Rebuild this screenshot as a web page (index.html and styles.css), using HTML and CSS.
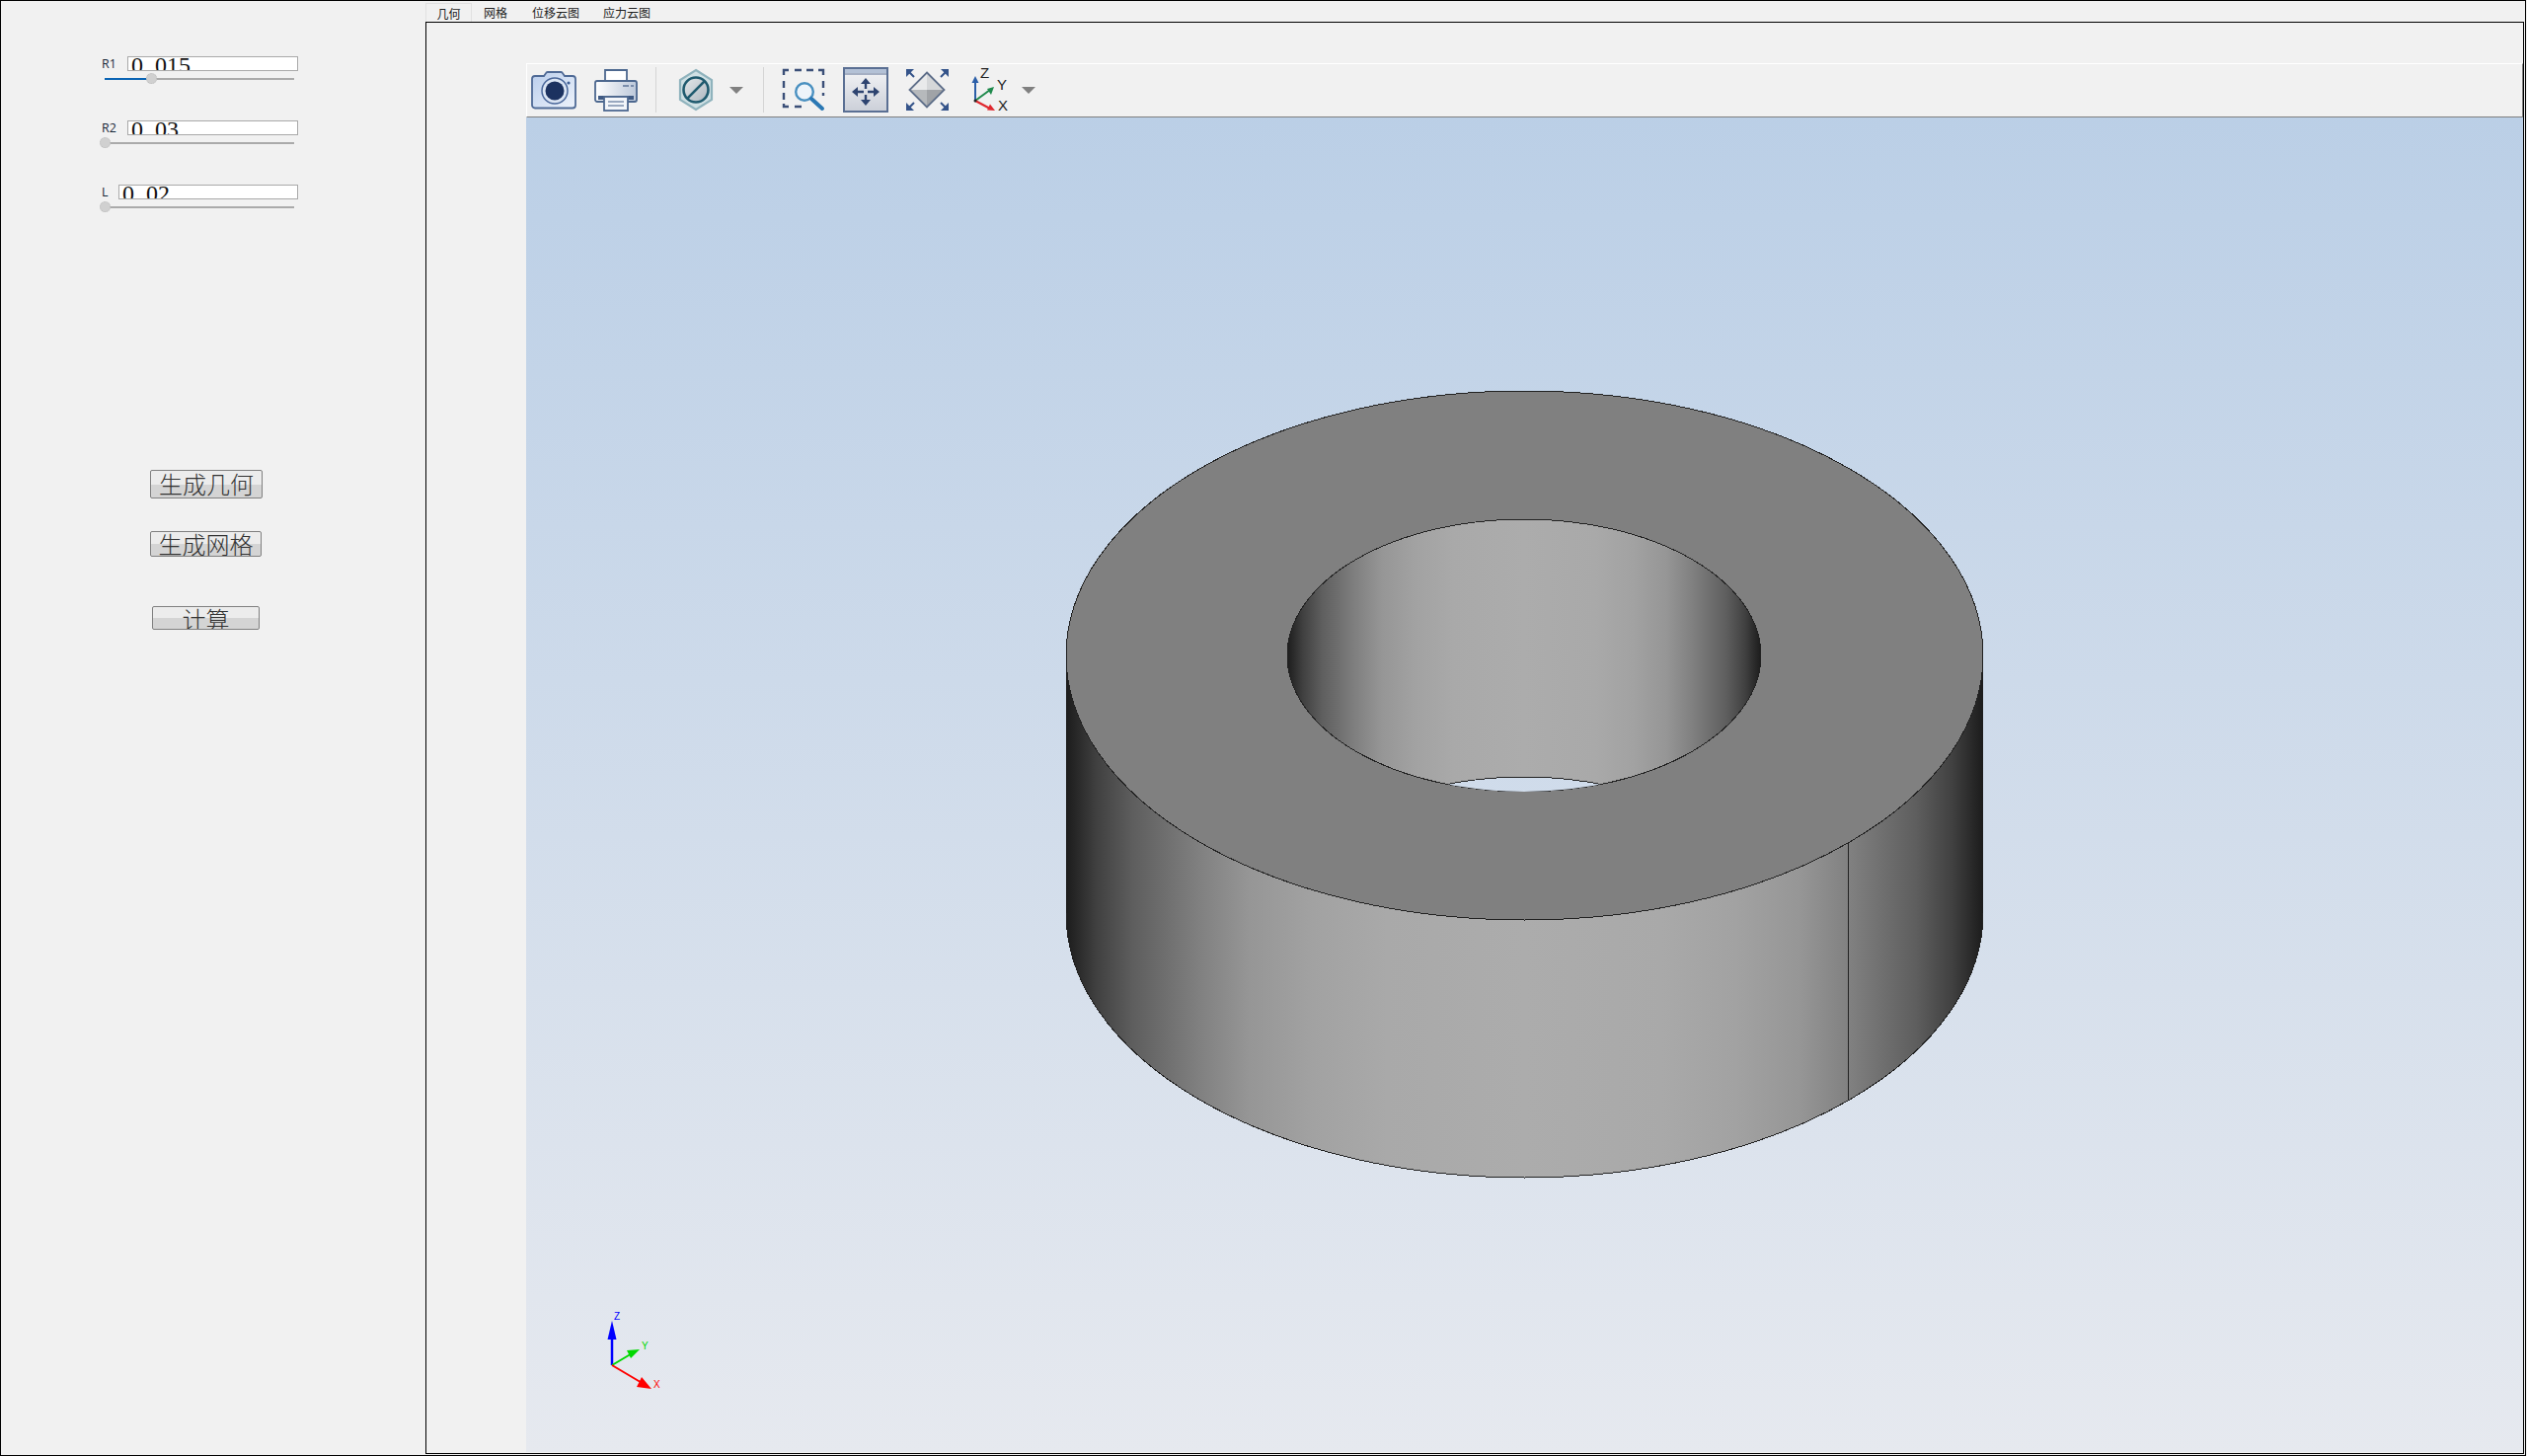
FILE: index.html
```html
<!DOCTYPE html>
<html lang="zh-CN">
<head>
<meta charset="utf-8">
<title>几何</title>
<link rel="stylesheet" href="styles.css">
</head>
<body>
<div class="window">
  <aside class="side">
    <div class="param">
      <div class="param-head"><span class="param-label">R1</span><div class="field field-r"><span class="num">0<i>.</i>015</span></div></div>
      <div class="slider"><div class="fill"></div><div class="knob knob-r1"></div></div>
    </div>
    <div class="param">
      <div class="param-head"><span class="param-label">R2</span><div class="field field-r"><span class="num">0<i>.</i>03</span></div></div>
      <div class="slider"><div class="knob"></div></div>
    </div>
    <div class="param">
      <div class="param-head"><span class="param-label param-label-l">L</span><div class="field field-l"><span class="num">0<i>.</i>02</span></div></div>
      <div class="slider"><div class="knob"></div></div>
    </div>
    <button class="btn btn-geo">生成几何</button>
    <button class="btn btn-mesh">生成网格</button>
    <button class="btn btn-calc">计算</button>
  </aside>
  <main class="main">
    <nav class="tabs">
      <span class="tab tab-active">几何</span>
      <span class="tab tab-2">网格</span>
      <span class="tab tab-3">位移云图</span>
      <span class="tab tab-4">应力云图</span>
    </nav>
    <section class="pane">
      <div class="view">
        <div class="toolbar">
          <svg class="tool i-camera" viewBox="0 0 46 40">
            <defs><linearGradient id="camg" x1="0" y1="0" x2="1" y2="1"><stop offset="0" stop-color="#b9cdec"/><stop offset="0.6" stop-color="#d9e4f5"/><stop offset="1" stop-color="#eef3fb"/></linearGradient></defs>
            <path d="M4 6h9l2.500-3.500a2 2 0 0 1 1.500-.5h13a2 2 0 0 1 1.500.5L34 6h8a3 3 0 0 1 3 3v26.500a3 3 0 0 1-3 3H4a3 3 0 0 1-3-3V9a3 3 0 0 1 3-3z" fill="url(#camg)" stroke="#4f6a96" stroke-width="1.800"/>
            <circle cx="24" cy="21" r="13" fill="#dbe5f4" stroke="#4a679a" stroke-width="1.500"/>
            <circle cx="24" cy="21" r="9.500" fill="#1c3260"/>
            <circle cx="38" cy="13" r="1.600" fill="#3f5f95"/>
          </svg>
          <svg class="tool i-print" viewBox="0 0 44 46">
            <defs><linearGradient id="prg" x1="0" y1="0" x2="1" y2="0"><stop offset="0" stop-color="#ffffff"/><stop offset="1" stop-color="#bcc8da"/></linearGradient></defs>
            <path d="M11 15V3h22v12" fill="#fff" stroke="#4d688f" stroke-width="1.800"/>
            <rect x="1" y="14" width="42" height="21" rx="2" fill="url(#prg)" stroke="#4d688f" stroke-width="1.800"/>
            <rect x="4" y="29" width="36" height="4" fill="#3f5a84"/>
            <path d="M29 19h6M37 19h3" stroke="#7a8dab" stroke-width="2"/>
            <rect x="10" y="30" width="24" height="14" fill="#f3f6fa" stroke="#4d688f" stroke-width="1.800"/>
            <path d="M14 35h16M14 39h16" stroke="#7c8fac" stroke-width="1.600"/>
          </svg>
          <span class="sep sep-1"></span>
          <svg class="tool i-hex" viewBox="0 0 36 44">
            <defs><linearGradient id="hexg" x1="0" y1="0" x2="1" y2="1"><stop offset="0" stop-color="#e3e8ea"/><stop offset="1" stop-color="#adb6bf"/></linearGradient></defs>
            <path d="M18 2l16 10v20L18 42 2 32V12z" fill="#cfe0e4" stroke="#8fb3bd" stroke-width="2.200"/>
            <circle cx="18" cy="22" r="12.500" fill="url(#hexg)" stroke="#1f5a6e" stroke-width="2.600"/>
            <path d="M9.200 30.800l17.600-17.600" stroke="#1f5a6e" stroke-width="2.600"/>
          </svg>
          <span class="caret caret-1"></span>
          <span class="sep sep-2"></span>
          <svg class="tool i-zoom" viewBox="0 0 44 44">
            <path d="M2 7V2h5M13 2h7M25 2h7M37 2h5v5M42 13v7M42 25v3M2 13v7M2 25v7M2 36v3h5M13 39h7" fill="none" stroke="#3b4f78" stroke-width="2.400"/>
            <circle cx="23" cy="24" r="8.800" fill="#eef4fa" stroke="#4a90c0" stroke-width="2.400"/>
            <path d="M30 31l11 10" stroke="#2b78b4" stroke-width="4" stroke-linecap="round"/>
          </svg>
          <svg class="tool i-pan" viewBox="0 0 46 46">
            <defs><linearGradient id="pang" x1="0" y1="0" x2="0" y2="1"><stop offset="0" stop-color="#f4f5f7"/><stop offset="1" stop-color="#cbcfd8"/></linearGradient></defs>
            <rect x="1" y="1" width="44" height="44" fill="url(#pang)" stroke="#5a6f93" stroke-width="2"/>
            <rect x="2" y="2" width="42" height="4" fill="#b3c1d6"/>
            <path d="M2 7h42" stroke="#5a6f93" stroke-width="1"/>
            <path d="M23 15v7M23 28v7M15 25h6M25 25h7" stroke="#2e4470" stroke-width="2.400"/>
            <path d="M23 11l5 6h-10zM23 39l5-6h-10zM9 25l6-5v10zM37 25l-6-5v10z" fill="#2e4470"/>
          </svg>
          <svg class="tool i-fit" viewBox="0 0 46 44">
            <path d="M22 4.500L39.500 22H4.500z" fill="#e9eaeb"/>
            <path d="M22 4.500L39.500 22H22z" fill="#d5d7d9"/>
            <path d="M22 39.500L39.500 22H22z" fill="#a0a3a7"/>
            <path d="M22 39.500L4.500 22H22z" fill="#b6b9bc"/>
            <path d="M22 4.500L39.500 22 22 39.500 4.500 22z" fill="none" stroke="#5f6f8a" stroke-width="1.800"/>
            <path d="M1 1h8l-8 8zM44 1h-8l8 8zM1 43h8l-8-8zM44 43h-8l8-8z" fill="#35548a"/>
            <path d="M3 3l6 6M42 3l-6 6M3 41l6-6M42 41l-6-6" stroke="#35548a" stroke-width="2"/>
          </svg>
          <svg class="tool i-axes" viewBox="0 0 46 50">
            <path d="M4 36V16" stroke="#2c5fa8" stroke-width="2"/>
            <path d="M4 11l3.500 7h-7z" fill="#2c5fa8"/>
            <path d="M4 36l15-11" stroke="#1f8a4c" stroke-width="2"/>
            <path d="M23 22l-3 8-4-6z" fill="#1f8a4c"/>
            <path d="M4 36l15 8" stroke="#e0282e" stroke-width="2"/>
            <path d="M24 46l-8-.5 3-6z" fill="#e0282e"/>
            <circle cx="4" cy="36" r="1.500" fill="#222"/>
            <text x="9" y="13" class="axis-txt">Z</text>
            <text x="26" y="25" class="axis-txt">Y</text>
            <text x="27" y="46" class="axis-txt">X</text>
          </svg>
          <span class="caret caret-2"></span>
        </div>
        <svg class="scene" viewBox="533 119 2023 1352">
          <defs>
            <linearGradient id="cylOuter" gradientUnits="userSpaceOnUse" x1="1080" y1="0" x2="2009" y2="0">
              <stop offset="0" stop-color="#1c1c1c"/><stop offset="0.015" stop-color="#2c2c2c"/><stop offset="0.033" stop-color="#404040"/><stop offset="0.073" stop-color="#5e5e5e"/><stop offset="0.145" stop-color="#808080"/><stop offset="0.2" stop-color="#969696"/><stop offset="0.27" stop-color="#a2a2a2"/><stop offset="0.35" stop-color="#a9a9a9"/><stop offset="0.5" stop-color="#acacac"/><stop offset="0.65" stop-color="#a9a9a9"/><stop offset="0.73" stop-color="#a2a2a2"/><stop offset="0.8" stop-color="#969696"/><stop offset="0.855" stop-color="#808080"/><stop offset="0.927" stop-color="#5e5e5e"/><stop offset="0.967" stop-color="#404040"/><stop offset="0.985" stop-color="#2c2c2c"/><stop offset="1" stop-color="#1c1c1c"/>
            </linearGradient>
            <linearGradient id="cylInner" gradientUnits="userSpaceOnUse" x1="1304" y1="0" x2="1784" y2="0">
              <stop offset="0" stop-color="#1c1c1c"/><stop offset="0.015" stop-color="#2c2c2c"/><stop offset="0.033" stop-color="#404040"/><stop offset="0.073" stop-color="#5e5e5e"/><stop offset="0.145" stop-color="#808080"/><stop offset="0.2" stop-color="#969696"/><stop offset="0.27" stop-color="#a2a2a2"/><stop offset="0.35" stop-color="#a9a9a9"/><stop offset="0.5" stop-color="#acacac"/><stop offset="0.65" stop-color="#a9a9a9"/><stop offset="0.73" stop-color="#a2a2a2"/><stop offset="0.8" stop-color="#969696"/><stop offset="0.855" stop-color="#808080"/><stop offset="0.927" stop-color="#5e5e5e"/><stop offset="0.967" stop-color="#404040"/><stop offset="0.985" stop-color="#2c2c2c"/><stop offset="1" stop-color="#1c1c1c"/>
            </linearGradient>
            <clipPath id="holeClip"><ellipse cx="1544" cy="664" rx="240" ry="138"/></clipPath>
            <linearGradient id="bgSliver" gradientUnits="userSpaceOnUse" x1="0" y1="119" x2="0" y2="1471">
              <stop offset="0" stop-color="#b9cee6"/><stop offset="1" stop-color="#e6e9ef"/>
            </linearGradient>
          </defs>
          <g shape-rendering="crispEdges">
            <path d="M1080 664V925A464.500 268 0 0 0 2009 925V664Z" fill="url(#cylOuter)"/>
            <path d="M1080 925A464.500 268 0 0 0 2009 925" fill="none" stroke="#222" stroke-width="1"/>
            <ellipse cx="1544.500" cy="664" rx="464.500" ry="268" fill="#808080" stroke="#222" stroke-width="1"/>
            <ellipse cx="1544" cy="664" rx="240" ry="138" fill="url(#cylInner)" stroke="#222" stroke-width="1"/>
            <g clip-path="url(#holeClip)">
              <ellipse cx="1544" cy="925" rx="240" ry="138" fill="url(#bgSliver)" stroke="#222" stroke-width="1"/>
            </g>
            <path d="M1872.500 854V1115" stroke="#222" stroke-width="1"/>
          </g>
          <path d="M620 1383V1356" stroke="#0000ff" stroke-width="2.500"/>
          <path d="M620 1338l4.500 19h-9z" fill="#0000ff"/>
          <path d="M620 1383l22-13" stroke="#00d800" stroke-width="2"/>
          <path d="M648 1367l-9 9-4-8z" fill="#00d800"/>
          <path d="M620 1383l32 19" stroke="#ff0000" stroke-width="2"/>
          <path d="M660 1407l-15-2 5-10z" fill="#ff0000"/>
          <text x="622" y="1337" class="tri tri-z">Z</text>
          <text x="650" y="1367" class="tri tri-y">Y</text>
          <text x="662" y="1406" class="tri tri-x">X</text>
        </svg>
      </div>
    </section>
  </main>
</div>
</body>
</html>
```
FILE: styles.css
```css
* { box-sizing: border-box; }
html, body { margin: 0; padding: 0; background: #f1f1f1; }
.window {
  width: 2559px;
  height: 1475px;
  display: flex;
  background: #f1f1f1;
  border: 1px solid #000;
  overflow: hidden;
}
.side {
  width: 430px;
  flex: none;
  display: flex;
  flex-direction: column;
  align-items: flex-start;
  padding: 56px 0 0 102px;
}
.param { height: 65px; width: 200px; }
.param-head { display: flex; align-items: flex-start; height: 15px; }
.param-label {
  width: 26px;
  flex: none;
  font: 12.5px/14px "Open Sans", "Liberation Sans", sans-serif;
  color: #1a2a3a;
  margin-top: 1px;
}
.param-label-l { width: 17px; }
.field {
  height: 15px;
  width: 173px;
  background: #fff;
  border: 1px solid #a9a9a9;
  overflow: hidden;
  padding-left: 3px;
}
.field-l { width: 182px; }
.num {
  display: block;
  font: 24px/24px "Liberation Serif", serif;
  color: #111;
  margin-top: -4px;
  white-space: nowrap;
}
.num i { font-style: normal; margin-right: 6px; }
.slider {
  position: relative;
  margin: 7px 0 0 3px;
  width: 192px;
  height: 2px;
  background: #aaaaaa;
}
.fill { width: 44px; height: 2px; background: #0a64b4; }
.knob {
  position: absolute;
  left: -5px;
  top: -5px;
  width: 11px;
  height: 11px;
  border-radius: 50%;
  background: #d0d0d0;
  border: 1px dotted #bdbdbd;
}
.knob-r1 { left: 42px; }
.btn {
  display: block;
  padding: 0 0 2px;
  border: 1px solid #808080;
  border-radius: 2px;
  background: linear-gradient(#ececec 0, #ececec 52%, #d4d4d4 52%, #d4d4d4 100%);
  font: 300 24px/24px "Noto Sans CJK SC", sans-serif;
  color: #333;
  text-align: center;
  white-space: nowrap;
  overflow: hidden;
}
.btn-geo { width: 114px; height: 29px; margin: 224px 0 0 49px; }
.btn-mesh { width: 113px; height: 26px; margin: 33px 0 0 49px; }
.btn-calc { width: 109px; height: 24px; margin: 50px 0 0 51px; }

.main { flex: 1; display: flex; flex-direction: column; min-width: 0; padding: 0 1px 1px 0; }
.tabs {
  height: 21px;
  display: flex;
  align-items: flex-start;
  font: 12px/20px "Noto Sans CJK SC", sans-serif;
  color: #222;
  padding-top: 2px;
}
.tab { display: block; height: 19px; line-height: 20px; white-space: nowrap; }
.tab-active {
  width: 47px;
  text-align: center;
  background: #f1f1f1;
  border: 1px solid #e0e0e0;
  border-bottom: none;
}
.tab-2 { margin-left: 12px; }
.tab-3 { margin-left: 25px; }
.tab-4 { margin-left: 24px; }
.pane {
  flex: 1;
  border: 1px solid #000;
  padding: 41px 0 1px 101px;
  display: flex;
  min-height: 0;
}
.view {
  flex: 1;
  display: flex;
  flex-direction: column;
  background: linear-gradient(#b9cee6, #e6e9ef);
  min-width: 0;
}
.toolbar {
  height: 55px;
  flex: none;
  background: #f1f1f1;
  border-top: 1px solid #fff;
  border-left: 1px solid #fff;
  border-right: 1px solid #808080;
  border-bottom: 1px solid #808080;
  padding-bottom: 1px;
  display: flex;
  align-items: center;
}
.tool { display: block; flex: none; }
.i-camera { width: 46px; height: 40px; margin-left: 4px; }
.i-print { width: 44px; height: 46px; margin-left: 18px; }
.i-hex { width: 36px; height: 44px; margin-left: 22px; }
.i-zoom { width: 44px; height: 44px; margin-left: 18px; }
.i-pan { width: 46px; height: 46px; margin-left: 18px; }
.i-fit { width: 46px; height: 44px; margin-left: 17px; }
.i-axes { width: 46px; height: 50px; margin-left: 21px; }
.sep { display: block; flex: none; width: 1px; height: 46px; background: #d4d4d4; }
.sep-1 { margin-left: 18px; }
.sep-2 { margin-left: 20px; }
.caret {
  display: block;
  flex: none;
  width: 0;
  height: 0;
  border-left: 7px solid transparent;
  border-right: 7px solid transparent;
  border-top: 7px solid #808080;
}
.caret-1 { margin-left: 16px; }
.caret-2 { margin-left: 5px; }
.axis-txt { font: 15px "Liberation Sans", sans-serif; fill: #222; }
.scene { display: block; flex: 1; width: 100%; min-height: 0; }
.tri { font: 10px "Liberation Sans", sans-serif; }
.tri-z { fill: #0000ff; }
.tri-y { fill: #00d800; }
.tri-x { fill: #ff0000; }
```
